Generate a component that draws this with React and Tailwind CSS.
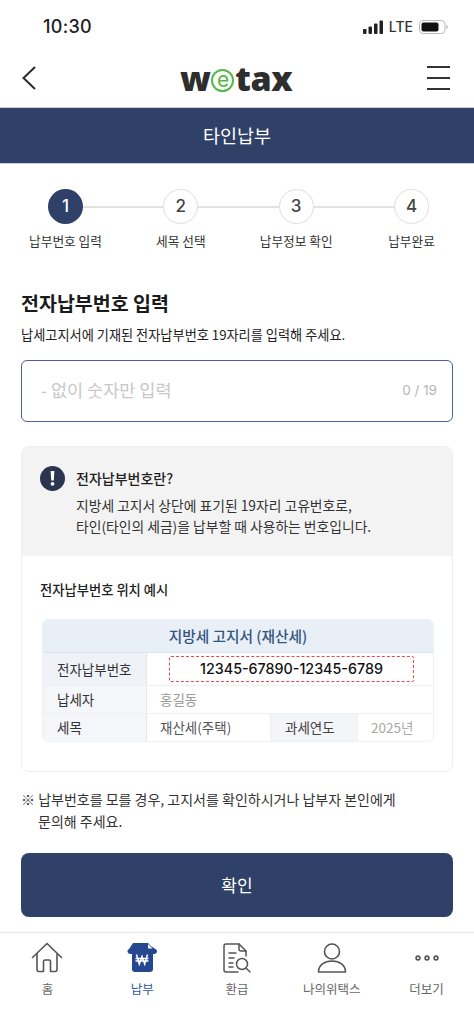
import React from 'react'

const steps = [
  { n: 1, label: '납부번호 입력', active: true },
  { n: 2, label: '세목 선택' },
  { n: 3, label: '납부정보 확인' },
  { n: 4, label: '납부완료' },
]

function StatusBar() {
  return (
    <div className="h-[52px] flex items-center justify-between pl-[43px] pr-[25px] pt-[1px]">
      <span className="text-[18px] font-medium text-[#222] font-['Inter',sans-serif] tracking-[0.3px]">10:30</span>
      <div className="flex items-center gap-[5px]">
        <svg width="21" height="14" viewBox="0 0 21 14" fill="#222">
          <rect x="0" y="9" width="3.5" height="5" rx="1" />
          <rect x="5.5" y="6.5" width="3.5" height="7.5" rx="1" />
          <rect x="11" y="3.5" width="3.5" height="10.5" rx="1" />
          <rect x="16.5" y="0.5" width="3.5" height="13.5" rx="1" />
        </svg>
        <span className="text-[14px] font-medium text-[#333] font-['Inter',sans-serif]">LTE</span>
        <svg width="30" height="14" viewBox="0 0 30 14" className="ml-[1px]">
          <rect x="0.5" y="0.5" width="25.5" height="13" rx="3.5" fill="none" stroke="#bbb" />
          <rect x="2.5" y="2.5" width="17" height="9" rx="2" fill="#111" />
          <path d="M27.5 5v4c.8-.3 1.2-1 1.2-2s-.4-1.7-1.2-2z" fill="#aaa" />
        </svg>
      </div>
    </div>
  )
}

function Header() {
  return (
    <div className="h-[55px] flex items-center justify-between pl-[21px] pr-[24px] pb-[3px]">
      <svg width="16" height="26" viewBox="0 0 16 26" fill="none" stroke="#2a2a2a" strokeWidth="2">
        <path d="M14 2 2.5 13 14 24" />
      </svg>
      <div className="flex items-center text-[34px] leading-none font-extrabold text-[#2e2e2e] font-['Open_Sans',sans-serif] tracking-[-0.5px] ml-[8px]">
        <span>w</span>
        <span className="w-[23px] h-[23px] mt-[5px] mx-[1px] rounded-full border-2 border-[#55b84a] flex items-center justify-center text-[21px] font-normal text-[#55b84a] pb-[3px] font-['Inter',sans-serif]">e</span>
        <span>tax</span>
      </div>
      <div className="w-[23px] flex flex-col gap-[9px]">
        <div className="h-[2px] bg-[#333]" />
        <div className="h-[2px] bg-[#333]" />
        <div className="h-[2px] bg-[#333]" />
      </div>
    </div>
  )
}

function Stepper() {
  return (
    <div className="relative flex justify-between pl-[8px] pr-[5px] pt-[25px] h-[105px]">
      <div className="absolute left-[65px] right-[63px] top-[42px] h-[1.5px] bg-[#e2e2e2]" />
      {steps.map(s => (
        <div key={s.n} className="relative w-[115px] flex flex-col items-center">
          <div className={s.active
            ? 'w-[35px] h-[35px] rounded-full bg-[#2f4069] text-white flex items-center justify-center text-[17px] font-medium font-[\'Inter\',sans-serif]'
            : 'w-[35px] h-[35px] rounded-full bg-white border border-[#dedede] text-[#444] flex items-center justify-center text-[17px] font-medium font-[\'Inter\',sans-serif]'}>
            {s.n}
          </div>
          <div className="mt-[8px] text-[12.7px] leading-[18px] text-[#333]">{s.label}</div>
        </div>
      ))}
    </div>
  )
}

function InfoCard() {
  return (
    <div className="mt-[24px] rounded-[8px] border border-[#eee] overflow-hidden">
      <div className="bg-[#f3f3f3] h-[109px] pl-[18px] pt-[19px] flex gap-[11px]">
        <div className="w-[25px] h-[25px] rounded-full bg-[#2c3550] text-white flex items-center justify-center">
          <svg width="5" height="15" viewBox="0 0 5 15" fill="#fff">
            <path d="M.6 0h3.800L3.800 9.600H1.200z" />
            <circle cx="2.500" cy="12.800" r="1.900" />
          </svg>
        </div>
        <div>
          <div className="text-[14px] leading-[24px] font-medium text-[#222]">전자납부번호란?</div>
          <div className="mt-[5px] text-[13.8px] leading-[21px] text-[#333]">
            <div>지방세 고지서 상단에 표기된 19자리 고유번호로,</div>
            <div>타인(타인의 세금)을 납부할 때 사용하는 번호입니다.</div>
          </div>
        </div>
      </div>
      <div className="bg-white h-[215px] pl-[18px] pr-[18px] pt-[24px]">
        <div className="text-[13.3px] leading-[20px] font-medium text-[#222]">전자납부번호 위치 예시</div>
        <div className="mt-[19px] ml-[2px] rounded-[6px] overflow-hidden border border-[#eef0f3] text-[13.5px]">
          <div className="h-[33px] bg-[#e8eff7] border-b border-[#d9e4f0] flex items-center justify-center text-[14.7px] font-medium text-[#34557f]">
            지방세 고지서 (재산세)
          </div>
          <div className="flex h-[33px] border-b border-[#eef0f3]">
            <div className="w-[104px] bg-[#eff3f8] border-r border-[#e3e8ef] pl-[14px] flex items-center text-[#333]">전자납부번호</div>
            <div className="flex-1 pl-[22px] pr-[19px] flex items-center">
              <div className="w-full h-[26px] -mt-[1px] border-[1.5px] border-dashed border-[#f0444c] rounded-[2px] bg-white flex items-center justify-center text-[14.3px] font-medium text-[#111] font-['Inter',sans-serif]">
                12345-67890-12345-6789
              </div>
            </div>
          </div>
          <div className="flex h-[28px] border-b border-[#eef0f3]">
            <div className="w-[104px] bg-[#f4f6f9] border-r border-[#e3e8ef] pl-[14px] flex items-center text-[#333]">납세자</div>
            <div className="flex-1 pl-[13px] flex items-center text-[#999]">홍길동</div>
          </div>
          <div className="flex h-[27px]">
            <div className="w-[104px] bg-[#f4f6f9] border-r border-[#e3e8ef] pl-[14px] flex items-center text-[#333]">세목</div>
            <div className="w-[123px] pl-[13px] flex items-center text-[#555]">재산세(주택)</div>
            <div className="w-[88px] bg-[#f4f5f7] border-x border-[#eef0f3] pl-[14px] flex items-center text-[#444]">과세연도</div>
            <div className="flex-1 pl-[13px] flex items-center text-[#aaa]">2025년</div>
          </div>
        </div>
      </div>
    </div>
  )
}

function HomeIcon() {
  return (
    <svg width="32" height="31" viewBox="0 0 32 31" fill="none" stroke="#555" strokeWidth="1.6" strokeLinejoin="round" strokeLinecap="round">
      <path d="M1.500 15.500 16 1.500l14.500 14" />
      <path d="M6 12v15.500a2 2 0 0 0 2 2h4.500V19.500a1.500 1.500 0 0 1 1.500-1.500h4a1.500 1.500 0 0 1 1.500 1.500v10H24a2 2 0 0 0 2-2V12" />
    </svg>
  )
}

function PayIcon() {
  return (
    <svg width="30" height="30" viewBox="0 0 30 30">
      <path d="M6 0h15l3.500 3.500 4 2.500c1.500 1 2 2.500 1 3.800-.7 1-2 1.400-3.500 1.200V26a3 3 0 0 1-3 3H8a3 3 0 0 1-3-3V11C3.500 11.200 1.700 10.800 1 9.800 0 8.500.500 7 2 6z" fill="#24478f" />
      <path d="M21 1v4.500h4.500z" fill="#fff" />
      <path d="M9.500 11.500l2.800 9.500 2.700-7.500 2.700 7.500 2.800-9.500M8.500 15.500h13M8.500 18h13" fill="none" stroke="#fff" strokeWidth="1.500" />
    </svg>
  )
}

function RefundIcon() {
  return (
    <svg width="28" height="30" viewBox="0 0 28 30" fill="none" stroke="#555" strokeWidth="1.500" strokeLinecap="round" strokeLinejoin="round">
      <path d="M15 29H3a2 2 0 0 1-2-2V3a2 2 0 0 1 2-2h13l7 7v5" />
      <path d="M16 1v5a2 2 0 0 0 2 2h5" />
      <path d="M6 10h7M6 15h5M6 20h4M6 24h4" />
      <circle cx="19" cy="21" r="5.500" />
      <path d="M23 25l4 4" />
    </svg>
  )
}

function UserIcon() {
  return (
    <svg width="30" height="30" viewBox="0 0 30 30" fill="none" stroke="#555" strokeWidth="1.600" strokeLinejoin="round">
      <circle cx="15" cy="8.500" r="7.500" />
      <path d="M1.500 29c0-7 6-11 13.500-11s13.500 4 13.500 11z" />
    </svg>
  )
}

function MoreIcon() {
  return (
    <svg width="26" height="30" viewBox="0 0 26 30" fill="none" stroke="#555" strokeWidth="1.600">
      <circle cx="4" cy="15" r="1.900" />
      <circle cx="13" cy="15" r="1.900" />
      <circle cx="22" cy="15" r="1.900" />
    </svg>
  )
}

const tabs = [
  { label: '홈', icon: <HomeIcon /> },
  { label: '납부', icon: <PayIcon />, active: true },
  { label: '환급', icon: <RefundIcon /> },
  { label: '나의위택스', icon: <UserIcon /> },
  { label: '더보기', icon: <MoreIcon /> },
]

function BottomNav() {
  return (
    <div className="border-t border-[#e8e8e8] h-[92px] flex pt-[9px]">
      {tabs.map(t => (
        <div key={t.label} className="w-[95px] flex flex-col items-center">
          <div className="h-[31px] flex items-center justify-center">{t.icon}</div>
          <div className={t.active
            ? 'mt-[6px] text-[12.5px] leading-[20px] text-[#2f55a4]'
            : 'mt-[6px] text-[12.5px] leading-[20px] text-[#666]'}>{t.label}</div>
        </div>
      ))}
    </div>
  )
}

export default function App() {
  return (
    <div className="w-[474px] h-[1024px] bg-white overflow-hidden flex flex-col font-['Noto_Sans_CJK_KR','Inter',sans-serif]">
      <StatusBar />
      <Header />
      <div className="h-[57px] bg-[#2f4069] border-y border-[#c9cfdc] flex items-center justify-center text-white text-[18.5px] font-normal">
        타인납부
      </div>
      <Stepper />
      <div className="px-[21px] flex-1">
        <h1 className="mt-[19px] text-[19.5px] leading-[30px] font-semibold text-[#1a1a1a]">전자납부번호 입력</h1>
        <p className="mt-[7px] text-[13.2px] leading-[20px] text-[#222]">납세고지서에 기재된 전자납부번호 19자리를 입력해 주세요.</p>
        <div className="mt-[15px] h-[62px] border border-[#4c6297] rounded-[6px] flex items-center justify-between pl-[19px] pr-[15px] pb-[2px]">
          <span className="text-[17.5px] text-[#c8c8c8]">- 없이 숫자만 입력</span>
          <span className="text-[13.5px] text-[#b5b5b5] font-['Inter',sans-serif]">0 / 19</span>
        </div>
        <InfoCard />
        <div className="mt-[16px] text-[14px] leading-[22px] text-[#333]">
          <div>※ 납부번호를 모를 경우, 고지서를 확인하시거나 납부자 본인에게</div>
          <div className="pl-[17px]">문의해 주세요.</div>
        </div>
        <button className="mt-[21px] w-full h-[64px] rounded-[8px] bg-[#2f4069] text-white text-[17px] font-normal">확인</button>
      </div>
      <BottomNav />
    </div>
  )
}
